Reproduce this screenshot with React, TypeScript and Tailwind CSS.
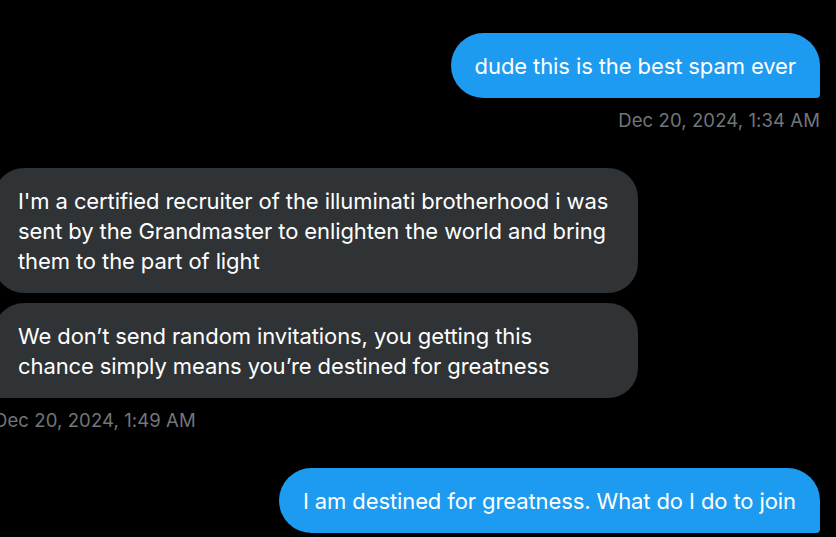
import React from "react";

const font = { fontFamily: "Inter, 'Noto Sans', sans-serif" };

export default function App() {
  return (
    <div
      className="w-[836px] h-[537px] overflow-hidden bg-black text-white"
      style={font}
    >
      <div className="flex flex-col pt-[33px] pr-4">
        <div className="flex justify-end">
          <div className="bg-[#1d9bf0] rounded-[34px] rounded-br-[4px] px-6 py-[17.5px] text-[22px] leading-[30px] tracking-[-0.1px] whitespace-nowrap">
            dude this is the best spam ever
          </div>
        </div>
        <div className="flex justify-end mt-[9px] text-[18.5px] leading-[26px] text-[#71767b] tracking-[0.1px]">
          Dec 20, 2024, 1:34 AM
        </div>

        <div className="flex flex-col items-start mt-[35px] ml-[-6px] gap-[10px]">
          <div className="w-[644px] bg-[#2f3336] rounded-[30px] pl-6 pr-6 py-[17.5px] text-[22px] leading-[30px] tracking-[-0.1px] whitespace-nowrap">
            I'm a certified recruiter of the illuminati brotherhood i was
            <br />
            sent by the Grandmaster to enlighten the world and bring
            <br />
            them to the part of light
          </div>
          <div className="w-[644px] bg-[#2f3336] rounded-[30px] rounded-bl-[4px] pl-6 pr-6 py-[17.5px] text-[22px] leading-[30px] tracking-[-0.1px] whitespace-nowrap">
            We don’t send random invitations, you getting this
            <br />
            chance simply means you’re destined for greatness
          </div>
          <div className="mt-[-1px] text-[18.5px] leading-[26px] text-[#71767b] tracking-[0.1px]">
            Dec 20, 2024, 1:49 AM
          </div>
        </div>

        <div className="flex justify-end mt-[35px]">
          <div className="bg-[#1d9bf0] rounded-[34px] rounded-br-[4px] px-6 py-[17.5px] text-[22px] leading-[30px] tracking-[-0.1px] whitespace-nowrap">
            I am destined for greatness. What do I do to join
          </div>
        </div>
      </div>
    </div>
  );
}
